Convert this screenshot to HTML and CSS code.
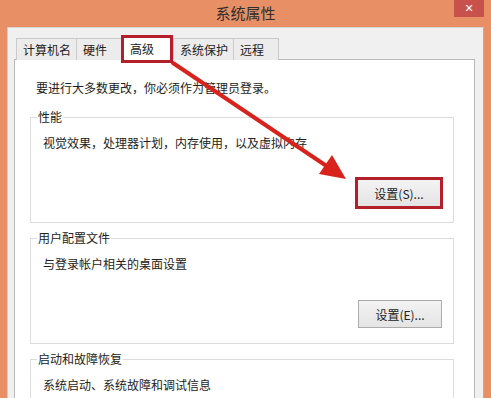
FILE: index.html
```html
<!DOCTYPE html>
<html lang="zh-CN">
<head>
<meta charset="utf-8">
<title>系统属性</title>
<link rel="stylesheet" href="styles.css">
</head>
<body>
<div class="window">
  <div class="titlebar">
    <span class="spacer"></span>
    <span class="title">系统属性</span>
    <span class="close">✕</span>
  </div>
  <div class="dialog">
    <div class="tabs">
      <span class="tab">计算机名</span>
      <span class="tab">硬件</span>
      <span class="tab active">高级</span>
      <span class="tab">系统保护</span>
      <span class="tab">远程</span>
    </div>
    <div class="panel">
      <p class="note">要进行大多数更改，你必须作为管理员登录。</p>
      <fieldset class="group perf">
        <legend>性能</legend>
        <p class="desc">视觉效果，处理器计划，内存使用，以及虚拟内存</p>
        <div class="actions"><button class="btn highlighted">设置(S)...</button></div>
      </fieldset>
      <fieldset class="group">
        <legend>用户配置文件</legend>
        <p class="desc">与登录帐户相关的桌面设置</p>
        <div class="actions"><button class="btn">设置(E)...</button></div>
      </fieldset>
      <fieldset class="group last">
        <legend>启动和故障恢复</legend>
        <p class="desc">系统启动、系统故障和调试信息</p>
      </fieldset>
    </div>
  </div>
  <svg class="arrow" width="491" height="398" viewBox="0 0 491 398">
    <line x1="173" y1="63" x2="328" y2="167" stroke="#d8231c" stroke-width="4" stroke-linecap="round"/>
    <polygon points="346,179 319,174 332,155" fill="#d8231c"/>
  </svg>
</div>
</body>
</html>
```

FILE: styles.css
```css
html, body {
  margin: 0;
  padding: 0;
  height: 100%;
  overflow: hidden;
}
body {
  background: #e98f66;
  font-family: "Noto Sans CJK SC", "Noto Sans", sans-serif;
  font-size: 12px;
  line-height: 16px;
  color: #222;
}
.window {
  position: relative;
  width: 491px;
  height: 398px;
  overflow: hidden;
}
.titlebar {
  height: 27px;
  display: grid;
  grid-template-columns: 1fr auto 1fr;
}
.title {
  font-size: 15px;
  line-height: 26px;
  color: #2e2e2e;
}
.close {
  justify-self: end;
  align-self: start;
  width: 30px;
  height: 17px;
  margin-right: 7px;
  background: #c9514b;
  color: #fff;
  font-family: "DejaVu Sans", sans-serif;
  font-size: 11px;
  font-weight: bold;
  line-height: 17px;
  text-align: center;
}
.dialog {
  margin: 0 7px;
  height: 380px;
  background: #f0f0f0;
  border-top: 1px solid #d6d6d6;
  border-left: 1px solid #cfcfcf;
  border-right: 1px solid #b0b0b0;
  padding: 10px 8px 0 6px;
}
.tabs {
  display: flex;
  margin-left: 2px;
  height: 22px;
  position: relative;
  z-index: 1;
}
.tab {
  box-sizing: border-box;
  min-width: 46px;
  height: 22px;
  padding: 0 5px 0 6px;
  border: 1px solid #cacaca;
  border-bottom: none;
  margin-right: -1px;
  background: #ececec;
  line-height: 21px;
  color: #222;
}
.tab.active {
  height: 24px;
  margin-top: -1px;
  width: 48px;
  min-width: 48px;
  margin-left: 2px;
  margin-right: 2px;
  background: #fff;
  padding-left: 6px;
  outline: 3px solid #b3202a;
  outline-offset: -1px;
  z-index: 2;
}
.panel {
  background: #fff;
  border: 1px solid #b8b8b8;
  height: 400px;
  padding: 20px 20px 0 15px;
  margin-top: -1px;
}
.note {
  margin: 0 0 13px 6px;
}
.group {
  margin: 0 0 7px 0;
  padding: 0 11px 15px 0;
  border: 1px solid #dcdcdc;
  min-inline-size: 0;
}
.group legend {
  margin-left: 6px;
  padding: 0 1px;
  line-height: 16px;
}
.desc {
  margin: 10px 0 0 12px;
}
.actions {
  display: flex;
  justify-content: flex-end;
  margin-top: 28px;
}
.btn {
  box-sizing: border-box;
  width: 84px;
  height: 28px;
  border: 1px solid #acacac;
  background: linear-gradient(#f3f3f3, #e4e4e4);
  font-family: "Noto Sans CJK SC", "Noto Sans", sans-serif;
  font-size: 12px;
  color: #222;
  padding: 0;
}
.btn.highlighted {
  margin-right: 1px;
  outline: 3px solid #b3202a;
  outline-offset: -1px;
}
.group.last {
  height: 60px;
}
.arrow {
  position: absolute;
  left: 0;
  top: 0;
  pointer-events: none;
}
```
